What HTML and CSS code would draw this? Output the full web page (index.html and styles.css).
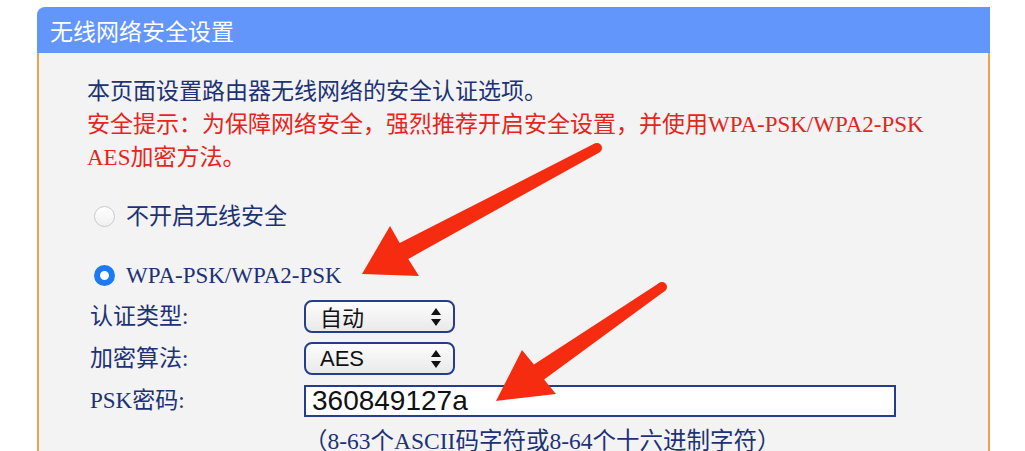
FILE: index.html
```html
<!DOCTYPE html>
<html lang="zh-CN">
<head>
    <meta charset="UTF-8">
    <title>无线网络安全设置</title>
    <link rel="stylesheet" href="styles.css">
</head>
<body>

    <div class="panel">
        <div class="panel-title">无线网络安全设置</div>

        <div class="panel-body">
            <p class="intro">本页面设置路由器无线网络的安全认证选项。</p>
            <p class="warning">安全提示：为保障网络安全，强烈推荐开启安全设置，并使用WPA-PSK/WPA2-PSK<br>AES加密方法。</p>

            <div class="radio-row first">
                <span class="radio"></span>
                <span>不开启无线安全</span>
            </div>

            <div class="radio-row second">
                <span class="radio checked"></span>
                <span>WPA-PSK/WPA2-PSK</span>
            </div>

            <div class="field-row">
                <span class="field-label">认证类型:</span>
                <div class="select">
                    <span>自动</span>
                    <svg width="10" height="18" viewBox="0 0 10 18"><path d="M5 0L10 7H0Z M0 11H10L5 18Z" fill="#111"/></svg>
                </div>
            </div>

            <div class="field-row">
                <span class="field-label">加密算法:</span>
                <div class="select">
                    <span class="latin">AES</span>
                    <svg width="10" height="18" viewBox="0 0 10 18"><path d="M5 0L10 7H0Z M0 11H10L5 18Z" fill="#111"/></svg>
                </div>
            </div>

            <div class="field-row">
                <span class="field-label">PSK密码:</span>
                <div class="text-input">360849127a</div>
            </div>

            <p class="hint">（8-63个ASCII码字符或8-64个十六进制字符）</p>
        </div>
    </div>

    <!-- red annotation arrows drawn over the screenshot -->
    <svg class="arrows" width="1025" height="451" viewBox="0 0 1025 451">
        <g fill="#f62c10">
            <circle cx="597" cy="148" r="5"/>
            <polygon points="594.6,143.6 399.7,243.1 390,226 362,274 419,276 408.3,258.9 599.4,152.4"/>
            <circle cx="662" cy="287" r="5"/>
            <polygon points="659.2,282.9 533.9,364.6 522,350 496,401 556,394 544.1,379.4 664.8,291.1"/>
        </g>
    </svg>

</body>
</html>
```

FILE: styles.css
```css
/* Page */
body {
    margin: 0;
    background-color: #fff;
    font-family: "Liberation Serif", "Noto Sans CJK SC", serif;
    color: #1c3275;
    overflow: hidden;
}

.panel {
    width: 953px;
    margin: 7px 0 0 37px;
}

.panel-title {
    height: 46px;
    line-height: 46px;
    padding-left: 13px;
    background-color: #6396fa;
    border-top-left-radius: 8px;
    color: #fff;
    font-family: "Noto Sans CJK SC", sans-serif;
    font-size: 23px;
}

.panel-body {
    background-color: #f3f3f3;
    border-left: 2px solid #eea150;
    border-right: 2px solid #eea150;
    padding: 22px 0 40px 48px;
    font-size: 23px;
    line-height: 33px;
}

.panel-body p {
    margin: 0;
}

.warning {
    color: #e8231b;
}

/* Radio options */
.radio-row {
    display: flex;
    align-items: center;
    height: 33px;
    padding-left: 7px;
}

.radio-row.first {
    margin-top: 26px;
}

.radio-row.second {
    margin-top: 26px;
}

.radio {
    width: 21px;
    height: 21px;
    box-sizing: border-box;
    border-radius: 50%;
    border: 1px solid #c9c9c9;
    background: linear-gradient(#fff, #f0f0f0);
    margin-right: 11px;
}

.radio.checked {
    border: 6.5px solid #1c7af5;
    background: #fff;
}

/* Form rows */
.field-row {
    display: flex;
    align-items: center;
    height: 33px;
    margin-top: 9px;
    padding-left: 3px;
}

.radio-row.second + .field-row {
    margin-top: 8px;
}

.field-label {
    width: 214px;
}

.select {
    width: 151px;
    height: 33px;
    box-sizing: border-box;
    border: 2px solid #243d8c;
    border-radius: 8px;
    background: linear-gradient(#fdfdfd, #e9e9e9);
    display: flex;
    align-items: center;
    justify-content: space-between;
    padding: 0 12px 0 14px;
    color: #111;
    font-family: "Noto Sans CJK SC", sans-serif;
    font-size: 22px;
}

.select .latin {
    font-family: "Liberation Sans", sans-serif;
}

.text-input {
    width: 592px;
    height: 32px;
    box-sizing: border-box;
    border: 2px solid #243d8c;
    background-color: #fff;
    padding-left: 6px;
    line-height: 28px;
    color: #111;
    font-family: "Liberation Sans", sans-serif;
    font-size: 28px;
}

.panel-body .hint {
    margin: 8px 0 0 217px;
    font-size: 23.5px;
}

/* Annotation overlay */
.arrows {
    position: absolute;
    left: 0;
    top: 0;
    pointer-events: none;
}
```
